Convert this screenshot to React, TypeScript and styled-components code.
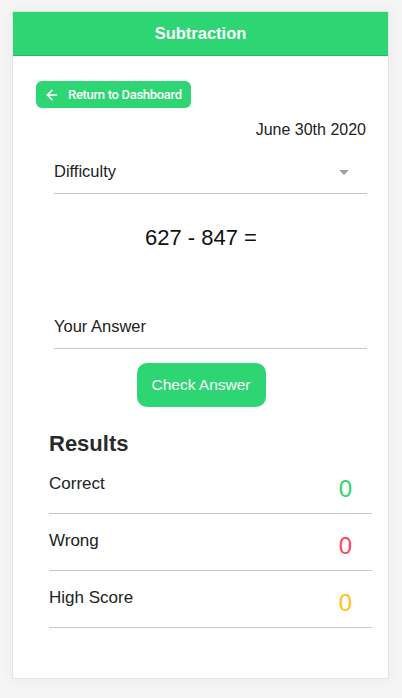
import React from 'react';
import styled, { createGlobalStyle } from 'styled-components';
import { ArrowLeft } from 'lucide-react';

const GlobalStyle = createGlobalStyle`
	html, body {
		margin: 0;
		padding: 0;
		background-color: #f5f5f5;
		font-family: 'Liberation Sans', Arial, sans-serif;
		color: #222;
	}
	* {
		box-sizing: border-box;
	}
`;

const Page = styled.div`
	padding: 11px 0 19px 12px;
`;

const Card = styled.div`
	width: 377px;
	height: 668px;
	background-color: #fff;
	border: 1px solid #e4e4e4;
	box-shadow: 0 0 14px rgba(0, 0, 0, 0.05);
	display: flex;
	flex-direction: column;
`;

const Header = styled.header`
	height: 44px;
	background-color: #2ed573;
	border-bottom: 1px solid #27b463;
	display: flex;
	align-items: center;
	justify-content: center;

	color: #fff;
	font-size: 16.5px;
	font-weight: bold;
`;

const Body = styled.div`
	padding: 25px 22px 0 23px;
	display: flex;
	flex-direction: column;
`;

const BackButton = styled.button`
	align-self: flex-start;
	height: 27px;
	padding: 0 9px 0 8px;
	border: none;
	border-radius: 6px;
	background-color: #2ed573;
	color: #fff;

	display: flex;
	align-items: center;
	gap: 8px;

	font-family: Roboto, 'Liberation Sans', sans-serif;
	font-size: 13px;
	font-weight: 500;
	letter-spacing: -0.3px;
`;

const DateLine = styled.div`
	margin-top: 13px;
	text-align: right;
	font-size: 16px;
	line-height: 18px;
`;

const Field = styled.div<{ top: number }>`
	margin: ${(p) => p.top}px -1px 0 18px;
	height: 43px;
	padding-top: 11px;
	border-bottom: 1px solid #c8c8cc;

	display: flex;
	align-items: flex-start;
	justify-content: space-between;

	font-size: 16.5px;
	line-height: 19px;
	color: #222;
`;

const Caret = styled.span`
	width: 0;
	height: 0;
	margin: 8px 18px 0 0;
	border-left: 5px solid transparent;
	border-right: 5px solid transparent;
	border-top: 5px solid #a0a0a0;
`;

const Equation = styled.div`
	margin-top: 31px;
	text-align: center;
	font-size: 22px;
	line-height: 26px;
	color: #111;
`;

const CheckButton = styled.button`
	align-self: center;
	margin-top: 14px;
	width: 129px;
	height: 44px;
	border: none;
	border-radius: 10px;
	background-color: #2ed573;
	color: #fff;

	font-family: 'Liberation Sans', Arial, sans-serif;
	font-size: 15.5px;
`;

const Results = styled.section`
	margin: 24px -6px 0 13px;
`;

const ResultsTitle = styled.h2`
	margin: 0;
	font-size: 22px;
	line-height: 26px;
	font-weight: bold;
	color: #2a2a2a;
`;

const Row = styled.div`
	height: 57px;
	padding: 17px 20px 0 0;
	border-bottom: 1px solid #c8c8c8;

	display: flex;
	justify-content: space-between;
	align-items: flex-start;
`;

const Label = styled.span`
	font-size: 17px;
	line-height: 20px;
	color: #222;
`;

const Value = styled.span<{ color: string }>`
	margin-top: 1px;
	font-size: 24px;
	line-height: 28px;
	color: ${(p) => p.color};
`;

const results = [
	{ label: 'Correct', value: 0, color: '#2ed573' },
	{ label: 'Wrong', value: 0, color: '#ff4757' },
	{ label: 'High Score', value: 0, color: '#ffc312' },
];

export default function App() {
	return (
		<>
			<GlobalStyle />
			<Page>
				<Card>
					<Header>Subtraction</Header>
					<Body>
						<BackButton>
							<ArrowLeft size={16} strokeWidth={2.4} />
							Return to Dashboard
						</BackButton>
						<DateLine>June 30th 2020</DateLine>
						<Field top={12}>
							<span>Difficulty</span>
							<Caret />
						</Field>
						<Equation>627 - 847 =</Equation>
						<Field top={55}>
							<span>Your Answer</span>
						</Field>
						<CheckButton>Check Answer</CheckButton>
						<Results>
							<ResultsTitle>Results</ResultsTitle>
							{results.map((r) => (
								<Row key={r.label}>
									<Label>{r.label}</Label>
									<Value color={r.color}>{r.value}</Value>
								</Row>
							))}
						</Results>
					</Body>
				</Card>
			</Page>
		</>
	);
}
